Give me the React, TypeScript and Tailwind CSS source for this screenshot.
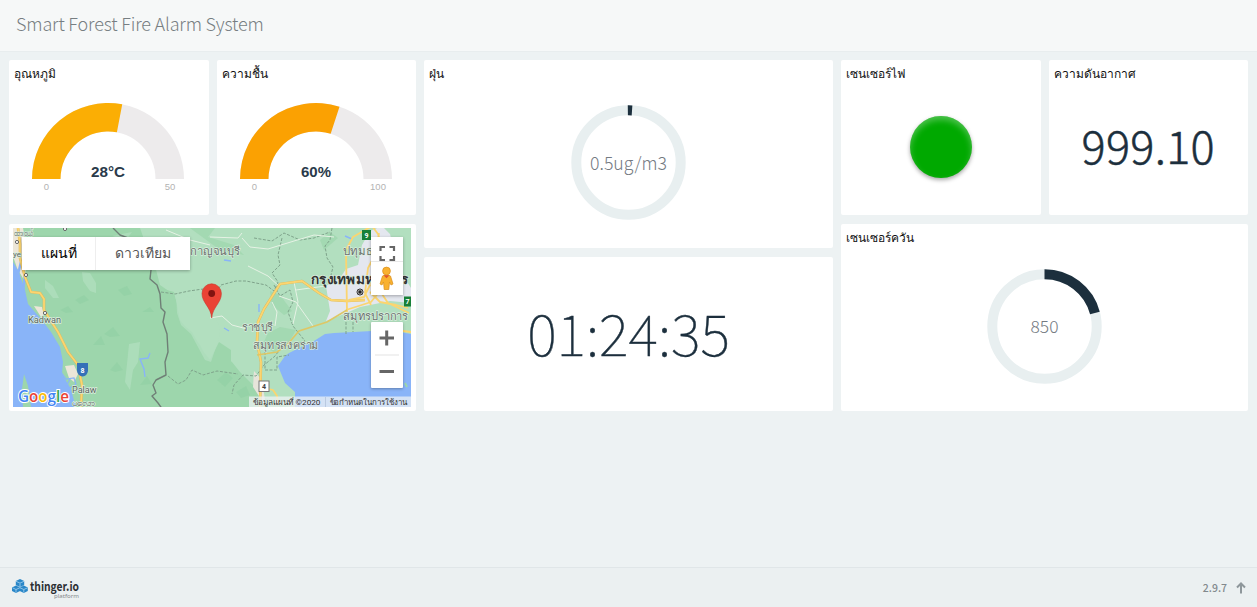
import React from "react";

const SANS = "font-['Noto_Sans_CJK_SC','Noto_Sans',sans-serif]";

function Card({ title, className = "", children }: { title?: string; className?: string; children?: React.ReactNode }) {
  return (
    <section className={`flex min-w-0 flex-col rounded-[2px] bg-white ${className}`}>
      {title && (
        <h2 className="h-[28px] pl-[5px] pt-[4px] text-[12px] leading-[20px] text-[#111] font-['Liberation_Sans',sans-serif]">{title}</h2>
      )}
      {children}
    </section>
  );
}

function Gauge({ ratio, color, label, max }: { ratio: number; color: string; label: string; max: string }) {
  const a = Math.PI * (1 - ratio);
  const c = Math.cos(a);
  const s = Math.sin(a);
  return (
    <svg viewBox="0 0.5 200 126" className="block h-[126px] w-[200px] shrink-0">
      <path d="M23 91.5A76 76 0 0 1 175 91.5H146.5A47.5 47.5 0 0 0 51.5 91.5Z" fill="#edebec" />
      <path
        d={`M23 91.5A76 76 0 0 1 ${99 + 76 * c} ${91.5 - 76 * s}L${99 + 47.5 * c} ${91.5 - 47.5 * s}A47.5 47.5 0 0 0 51.5 91.5Z`}
        fill={color}
      />
      <g textAnchor="middle" fontFamily="Liberation Sans, Arial, sans-serif">
        <text x="99" y="89.5" fontSize="15.5" fontWeight="700" fill="#2a3a4a" textLength={label.length > 3 ? 34 : 30} lengthAdjust="spacingAndGlyphs">{label}</text>
        <text x="37.5" y="102.5" fontSize="9.5" fill="#b3b3b3">0</text>
        <text x="161" y="102.5" fontSize="9.5" fill="#b3b3b3">{max}</text>
      </g>
    </svg>
  );
}

function Ring({ from, to, label, size, width }: { from: number; to: number; label: string; size: number; width: number }) {
  const len = 2 * Math.PI * 52.2;
  return (
    <svg viewBox="0.5 -0.5 116 116" className="block h-[116px] w-[116px]">
      <circle cx="58" cy="58" r="52.2" fill="none" stroke="#e8eff0" strokeWidth="10" />
      <circle
        cx="58" cy="58" r="52.2" fill="none" stroke="#1c2f3d" strokeWidth="10"
        strokeDasharray={`${(to - from) * len} ${len}`} transform={`rotate(${from * 360 - 90} 58 58)`}
      />
      <text x="58" y={58.5 + size * 0.37} textAnchor="middle" fontSize={size} fontWeight="300" fill="#747a82" fontFamily="Noto Sans CJK SC, sans-serif" textLength={width} lengthAdjust="spacingAndGlyphs">{label}</text>
    </svg>
  );
}

function MapArt() {
  return (
    <svg viewBox="13 228 398 179" className="block h-[179px] w-[398px]" preserveAspectRatio="none">
      <rect x="13" y="228" width="398" height="179" fill="#9dd6ac" />
      <g fill="#b2dfbf">
        <path d="M140 228H411V407H290L262 397 256 388 240 372 232 362 218 352 212 362 202 350 192 332 180 322 176 300 170 292 160 285 154 262 146 245Z" />
        <path d="M82 272l8 1 6 10 0 10-6-2-7-10zM45 280l8 6 6 12-6 0-8-10zM129 344l11-2-2 20-5 8-3 20-5-8 2-18zM71 250l30 2-12 6zM112 236l20-4-6 8z" opacity=".75" />
      </g>
      <g fill="#9dd6ac">
        <path d="M160 288l14 4 6 28 20 25 9 17 10-20 12 8 0 14 22 22 6 21H150l10-30z" />
        <path d="M268 333l12-6 16 3-8 14-14 8-12-6zM190 228l25 0-7 9 26 8 10 10-24-5zM270 291l10 4 12 16-8 4-12-10zM320 240l10-8 8 6-14 12z" opacity=".7" />
      </g>
      <path d="M176 292l14 6 10-6 12 20 8 14-1 12-8 24-6-2-14-26-10-9-4-12z" fill="#b2dfbf" opacity=".8" />
      <g fill="#84c99a" opacity=".3">
        <path d="M60 310l8-4 5 6-7 1zM93 345l8-9 4 9zM104 334l9-7 7 9-10 1zM75 300l9-5 5 5-9 4zM118 290l9-4 5 8-8 2zM142 312l8-5 4 5zM110 370l7-8 6 8-8 2zM140 385l7-9 5 8zM217 380l9-8 7 6-8 9zM236 392l10-6 4 9-9 3z" />
      </g>
      <path d="M13 262l5 8 7 20 3 14 13 15 10 13 9 15 3 15-1 12 9 15 2 8 3 10H13Z" fill="#89b4f8" />
      <path d="M24 374l4 12 3 21h-8l-1-18z" fill="#9dd6ac" />
      <path d="M13 228h10l4 22-1 18-2 12-7-12-4-12zM34 306l8 1 2 7-3 3zM65 366l9-1 4 9-4 8-5-4z" fill="#ece6d8" />
      <path d="M21 262l-3 12 1 12M25 274l-2 18" fill="none" stroke="#89b4f8" strokeWidth="2.500" />
      <path d="M61 372l5 7 8-1 2 6-6 4M70 379l-4 8" fill="none" stroke="#89b4f8" strokeWidth="1.2" />
      <path d="M278 366l7-10 4-3 10-5 15-7 11-7 9-1 20-1 35-2 22 4V407H295l0-15-10-9Z" fill="#89b4f8" />
      <path d="M326 286l14-8 6-9 12-4 4-20 8-14 12-5 8 8 9 35 12 19v15l-21-2-30 6-16 7-18 7 4-10z" fill="#e4e7ef" />
      <path d="M254 371l8 9 4 27-13-20z" fill="#e7e4da" />
      <g fill="none" stroke="#89b4f8" strokeWidth="1.4">
        <path d="M150 353l-2 5-8 1 4 10 1 8M259 304l0 8M224 260l7 1M224 328l5 3M345 236l7 3" />
      </g>
      <path d="M405 383l2 4" stroke="#9dd6ac" strokeWidth="2" />
      <g fill="none" stroke="#7fa38b" strokeWidth="1" strokeDasharray="3 1.5">
        <path d="M161 292l14 2 14-3 14-2M168 376l10 8 8-4 6-10 11 5 14-4 21 3M211 300l10-15 15-4 10 0 20 4 8 6 4-9-6-9 8-8-2-10 4-17M274 285l6 11 10-6 3 12-5 10 5 14 12 15-8 3-13 1-10 12-10 8-8 11-13-1-9 10-2 9M332 228l-2 12-5 6 2 12 6 9-3 12 6 4M265 352v18l12 0 0-13 12-2M254 238l18 3 12-8 16 7 14-2 16-6M346 322v12M353 322v10" />
      </g>
      <g fill="none" stroke="#e6f2e5" strokeWidth="1">
        <path d="M210 318l12-2 10 9 15 4M210 237l28 1 4-5M242 238l8 9 18 2 26-8 20-6 20 2M280 287l-12-11-20-10M272 302l5 10-2 14M294 282l4 20-5 22M313 326l-17-24-17-6M326 286l-16 2-14 2M166 230l24 10 20 5" />
      </g>
      <path d="M113 228l7 7 8 3 6 12 12 10 5 10-1 9 7 6 3 9 1 14 4 4-2 10 4 12 1 18-3 10 1 13-10 5-3 5 3 8-4 3 6 7 5 7" fill="none" stroke="#6f7f76" strokeWidth="1.4" strokeLinejoin="round" />
      <g fill="none" stroke="#dcb85a" strokeWidth="2.600" strokeLinejoin="round">
        <path d="M18 228l2 16 0 14 5 19 6 15 9 1 4 6 0 11 14 22 10 20 10 13 4 20-1 22" />
        <path d="M260 407l1-45-4-20 1-20 6-13 16-25 22-3 17 12 12 7 16 1 18 -1" />
      </g>
      <g fill="none" stroke="#fbd570" strokeWidth="1.800" strokeLinejoin="round">
        <path d="M18 228l2 16 0 14 5 19 6 15 9 1 4 6 0 11 14 22 10 20 10 13 4 20-1 22" />
        <path d="M260 407l1-45-4-20 1-20 6-13 16-25 22-3 17 12 12 7 16 1 18-1" />
        <path d="M347 312l-1-62 7-13 19-11 6 8 8 25 15 14M349 300l15-3 10-20 2-24 3-20M346 310l25-8 9-11 8 12 21 10M370 292l10 10 16 3 12 3M389 329l22 3M376 253l-8 15-3 25 6 12M265 388l8 2 4 6 1 9" />
      </g>
      <path d="M257 355l20-3 10-7 12-14 28-9 20-12" fill="none" stroke="#dec766" strokeWidth="1.600" />
      <g fill="#555">
        <circle cx="360" cy="292" r="3" fill="#222" stroke="#222" strokeWidth="1" /><circle cx="360" cy="292" r="2.200" fill="none" stroke="#ddd" strokeWidth=".8" />
        <circle cx="45" cy="313" r="1.6" fill="#fff" stroke="#666" /><circle cx="26" cy="275" r="1.6" fill="#fff" stroke="#666" /><circle cx="17" cy="242" r="1.6" fill="#fff" stroke="#666" /><circle cx="65" cy="229" r="1.600" fill="#fff" stroke="#666" />
      </g>
      <path d="M77 363h11v8q-1 5-5.500 5.500Q78 376 77 371Z" fill="#3570b8" />
      <rect x="362" y="230" width="9" height="10" fill="#188038" />
      <rect x="404" y="296.500" width="8" height="10" fill="#188038" />
      <rect x="259" y="381" width="10" height="10.500" fill="#fff" stroke="#777" />
      <g fontFamily="Roboto, sans-serif" fontSize="7" fontWeight="700" textAnchor="middle">
        <text x="82.500" y="372.500" fill="#fff">8</text><text x="366.500" y="237.500" fill="#fff">9</text>
        <text x="407.500" y="304" fill="#fff">7</text><text x="264" y="389" fill="#444">4</text>
      </g>
      <g fontFamily="Roboto, Noto Sans, sans-serif" fontSize="8" fill="#5c6662" stroke="#dcefe0" strokeWidth="1.3" paintOrder="stroke">
        <text x="28" y="322.500" fontSize="8.500" textLength="33" lengthAdjust="spacingAndGlyphs">Kadwan</text>
        <text x="72" y="393" fontSize="8.500" textLength="24.500" lengthAdjust="spacingAndGlyphs">Palaw</text>
        <text x="72" y="405.500" textLength="23" lengthAdjust="spacingAndGlyphs">ပုလော</text>
        <text x="14" y="236" textLength="19" lengthAdjust="spacingAndGlyphs">ထားဝယ်</text>
        <text x="13" y="257">ye</text>
        <g fontSize="11.500" fill="#6b716e">
          <text x="190" y="254.500" textLength="50" lengthAdjust="spacingAndGlyphs">กาญจนบุรี</text>
          <text x="343" y="255" textLength="44" lengthAdjust="spacingAndGlyphs">ปทุมธานี</text>
          <text x="242" y="330.500" textLength="31" lengthAdjust="spacingAndGlyphs">ราชบุรี</text>
          <text x="253" y="348.500" textLength="66" lengthAdjust="spacingAndGlyphs">สมุทรสงคราม</text>
          <text x="343" y="320" textLength="65" lengthAdjust="spacingAndGlyphs">สมุทรปราการ</text>
          <text x="311" y="283.500" textLength="97" lengthAdjust="spacingAndGlyphs" fontSize="13" fontWeight="700" fill="#333">กรุงเทพมหานคร</text>
        </g>
      </g>
      <path d="M211.700 318C211 307 202 303 202 293.500a9.700 9.700 0 0 1 19.400 0C221.400 303 212.500 307 211.700 318Z" fill="#ea4335" stroke="#c9352b" strokeWidth=".6" />
      <circle cx="211.700" cy="293.500" r="3.400" fill="#811411" />
      <rect x="249" y="396.500" width="162" height="10.500" fill="#eef2f4" opacity=".75" />
      <path d="M325.500 397V407" stroke="#b9c9e0" />
      <g fontFamily="Roboto, Noto Sans, sans-serif" fontSize="8" fill="#333">
        <text x="252.500" y="404.500" textLength="68" lengthAdjust="spacingAndGlyphs">ข้อมูลแผนที่ ©2020</text>
        <text x="329.500" y="404.500" textLength="77" lengthAdjust="spacingAndGlyphs">ข้อกำหนดในการใช้งาน</text>
      </g>
      <text x="18" y="401.500" fontFamily="Open Sans, sans-serif" fontSize="16" fontWeight="600" stroke="#fff" strokeWidth="2" paintOrder="stroke" textLength="51" lengthAdjust="spacingAndGlyphs">
        <tspan fill="#4285f4">G</tspan><tspan fill="#ea4335">o</tspan><tspan fill="#fbbc04">o</tspan><tspan fill="#4285f4">g</tspan><tspan fill="#34a853">l</tspan><tspan fill="#ea4335">e</tspan>
      </text>
    </svg>
  );
}

function MapWidget() {
  return (
    <div className="relative m-[4px] mt-[4px] h-[179px] w-[398px] overflow-hidden">
      <MapArt />
      <div className="absolute left-[9px] top-[9px] flex h-[33px] w-[168px] bg-white text-[14px] leading-[33px] shadow-[0_1px_3px_rgba(0,0,0,.3)] font-['Roboto','Noto_Sans',sans-serif]">
        <div className="w-[74px] border-r border-[#eee] text-center text-black">แผนที่</div>
        <div className="flex-1 text-center text-[#565656]">ดาวเทียม</div>
      </div>
      <div className="absolute left-[358px] top-[9px] h-[58px] w-[32px] bg-white shadow-[0_1px_3px_rgba(0,0,0,.3)]">
        <svg viewBox="0 0 32 58" className="block h-[58px] w-[32px]">
          <path d="M9.500 14V10H14M18.500 10H23V14M23 19v4H18.500M14 23H9.500V19" fill="none" stroke="#666" strokeWidth="2.200" />
          <path d="M0 24.500H32" stroke="#e8e8e8" />
          <path d="M11.500 39q1.500-1 4-1t4 1l2.500 8-2 1-1.500-3-.7 7.500h-4.600l-.7-7.500-1.500 3-2-1z" fill="#f9b12f" stroke="#d98e1c" strokeWidth=".7" />
          <circle cx="15.500" cy="34" r="3.900" fill="#f9b12f" stroke="#d98e1c" strokeWidth=".7" />
          <path d="M12.500 38.300l3 3 3-3z" fill="#e2552c" />
        </svg>
      </div>
      <div className="absolute left-[358px] top-[94px] h-[66px] w-[32px] rounded-[1px] bg-white shadow-[0_1px_3px_rgba(0,0,0,.3)]">
        <svg viewBox="0 0 32 66" className="block h-[66px] w-[32px]">
          <path d="M8.500 16H23M15.700 8.500V23.500M8.500 49.500H23" stroke="#666" strokeWidth="3" />
          <path d="M4 33H28" stroke="#e3e3e3" />
        </svg>
      </div>
    </div>
  );
}

function Logo() {
  return (
    <svg viewBox="0 -5 70 30" className="block h-[30px] w-[70px] overflow-visible">
      <g fill="#2a87c8">
        <path d="M8 1l4.200 2v4L8 9 3.800 7V3zM4 7.500l4 2v3.500l-4 2-4-2v-3.500zM11.800 7.500l4 2v3.500l-4 2-4-2v-3.500z" />
      </g>
      <path d="M4 3.300l4 1.800 4-1.800M.500 9.800L4 11.500l3.800-1.700M8 9.800l3.800 1.700 3.800-1.700M8 5.500V9M4 11.500v3M11.800 11.500v3" stroke="#a9d3ef" strokeWidth=".8" fill="none" />
      <text x="18" y="12.500" fontFamily="Noto Sans CJK SC, sans-serif" fontSize="12.5" fontWeight="600" fill="#2b2f33" textLength="49" lengthAdjust="spacingAndGlyphs">thinger.io</text>
      <text x="42" y="20" fontFamily="Noto Sans, sans-serif" fontSize="6" fill="#85898c" textLength="25" lengthAdjust="spacingAndGlyphs">platform</text>
    </svg>
  );
}

export default function App() {
  return (
    <div className={`flex h-[607px] w-full flex-col overflow-hidden bg-[#edf2f3] ${SANS}`}>
      <header className="flex h-[52px] shrink-0 items-center border-b border-[#e8edee] bg-[#f6f8f8] pb-[5px] pl-[16px]">
        <h1 className="text-[18px] font-light leading-[24px] tracking-[-0.16px] text-[#777e82]">Smart Forest Fire Alarm System</h1>
      </header>
      <main className="flex flex-1 gap-2 px-[9px] pt-[8.4px]">
        <div className="flex w-[407px] flex-col gap-[9px]">
          <div className="flex h-[154.6px] gap-2">
            <Card title="อุณหภูมิ" className="flex-1"><Gauge ratio={0.56} color="#fbae04" label="28°C" max="50" /></Card>
            <Card title="ความชื้น" className="flex-1"><Gauge ratio={0.6} color="#fba102" label="60%" max="100" /></Card>
          </div>
          <Card className="h-[187px]"><MapWidget /></Card>
        </div>
        <div className="flex w-[409px] flex-col gap-[9px]">
          <Card title="ฝุ่น" className="h-[187.6px]">
            <div className="flex justify-center pt-[16px]"><Ring from={-0.002} to={0.011} label="0.5ug/m3" size={18} width={77} /></div>
          </Card>
          <Card className="h-[154px] items-center justify-center pb-[5px]">
            <span className="text-[56.5px] font-thin leading-none text-[#1c2f3d] [-webkit-text-stroke:0.4px_#1c2f3d]">01:24:35</span>
          </Card>
        </div>
        <div className="flex w-[407px] flex-col gap-[9px]">
          <div className="flex h-[154.6px] gap-2">
            <Card title="เซนเซอร์ไฟ" className="flex-1">
              <div className="flex justify-center pt-[28px]">
                <div className="h-[62px] w-[62px] rounded-full bg-[#00a900] shadow-[inset_0_4px_6px_rgba(255,255,255,.3),0_2px_4px_rgba(0,0,0,.35)]" />
              </div>
            </Card>
            <Card title="ความดันอากาศ" className="flex-1">
              <div className="flex justify-center pt-[35px]">
                <span className="text-[45px] font-light leading-[44px] tracking-[0.3px] text-[#1c2f3d] [-webkit-text-stroke:0.5px_#1c2f3d]">999.10</span>
              </div>
            </Card>
          </div>
          <Card title="เซนเซอร์ควัน" className="h-[187px]">
            <div className="flex justify-center pt-[16px]"><Ring from={0} to={0.2076} label="850" size={17} width={28} /></div>
          </Card>
        </div>
      </main>
      <footer className="flex h-[40px] shrink-0 items-center justify-between border-t border-[#e0e6e8] bg-[#ebf0f1] pl-[12px] pr-[10px]">
        <Logo />
        <div className="flex items-center gap-[8px] pt-px text-[10.5px] font-medium text-[#82898d]">
          <span>2.9.7</span>
          <svg viewBox="0 0 12 12" className="h-[12px] w-[12px]"><path d="M6 11.500V2M2 5.500L6 1.500 10 5.500" fill="none" stroke="#8e979b" strokeWidth="2" /></svg>
        </div>
      </footer>
    </div>
  );
}
